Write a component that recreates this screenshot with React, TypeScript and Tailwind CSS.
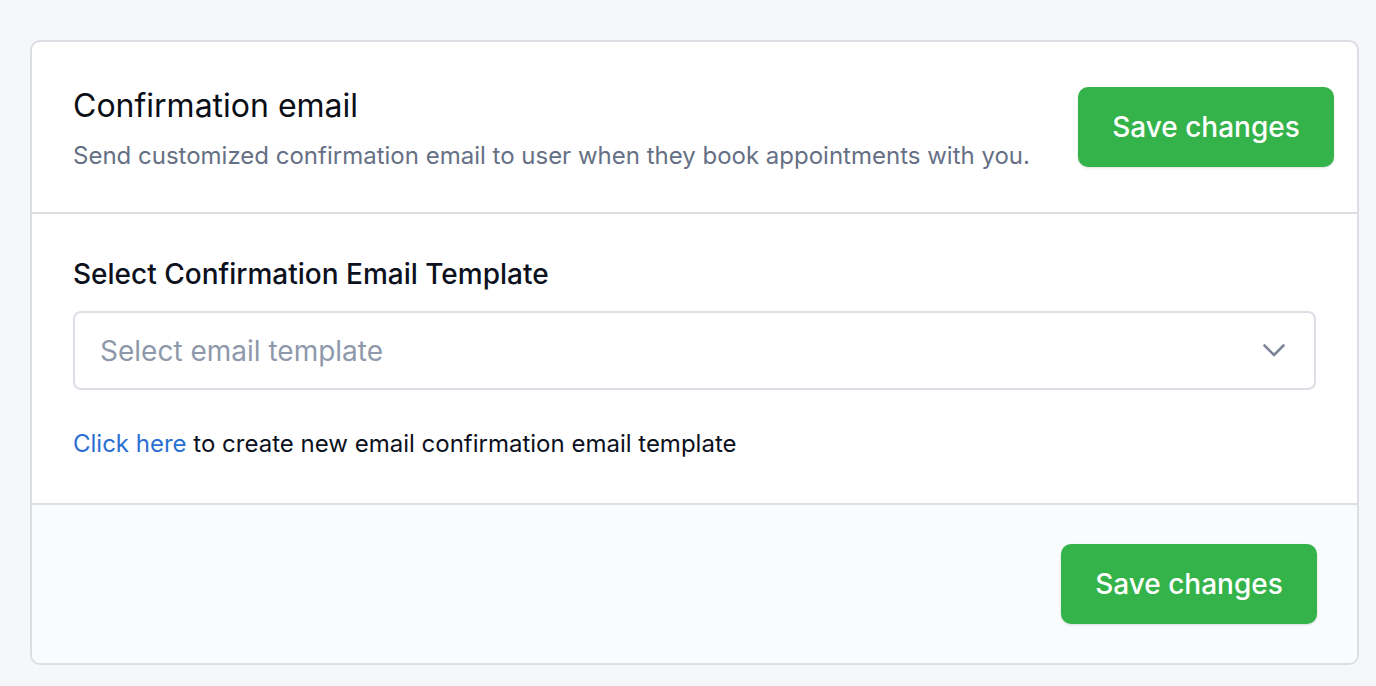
function SaveButton() {
  return (
    <button
      type="button"
      className="h-[80px] w-[256px] rounded-[10px] bg-[#34b34a] text-[28px] font-medium text-white shadow-sm"
    >
      Save changes
    </button>
  )
}

function Chevron() {
  return (
    <svg width="22" height="13" viewBox="0 0 22 13" fill="none" className="text-[#7c8698]">
      <polyline points="1.5,1.5 11,11 20.5,1.5" stroke="currentColor" strokeWidth="2.6" strokeLinecap="round" strokeLinejoin="round" />
    </svg>
  )
}

export default function App() {
  return (
    <div className="min-h-screen bg-[#f6f7fb] pl-[30px] pr-[17px] pt-[40px] pb-[20px] font-['Inter',sans-serif]">
      <div className="overflow-hidden rounded-[10px] border-2 border-[#dcdee4] bg-white">
        {/* Header */}
        <div className="flex h-[170px] items-center justify-between pl-[41px] pr-[23px]">
          <div className="pt-[4px]">
            <h1 className="text-[32px] leading-[40px] font-normal text-[#0a0e17]">Confirmation email</h1>
            <p className="mt-[14px] text-[24px] leading-[32px] text-[#667085]">
              Send customized confirmation email to user when they book appointments with you.
            </p>
          </div>
          <SaveButton />
        </div>

        {/* Body */}
        <div className="border-t-2 border-[#dcdee4] px-[41px] pt-[42px] pb-[43px]">
          <label className="block text-[28px] leading-[36px] font-medium text-[#0c111d]">
            Select Confirmation Email Template
          </label>
          <div className="mt-[19px] flex h-[79px] items-center justify-between rounded-[8px] border-2 border-[#dcdfe5] pl-[25px] pr-[29px]">
            <span className="text-[28px] text-[#8e99ab]">Select email template</span>
            <Chevron />
          </div>
          <p className="mt-[38px] text-[24px] leading-[32px] text-[#0c111d]">
            <a href="#" className="text-[#2b6fd3]">Click here</a> to create new email confirmation email template
          </p>
        </div>

        {/* Footer */}
        <div className="flex h-[160px] items-center justify-end border-t-2 border-[#dcdee4] bg-[#fafbfd] px-[40px]">
          <SaveButton />
        </div>
      </div>
    </div>
  )
}
